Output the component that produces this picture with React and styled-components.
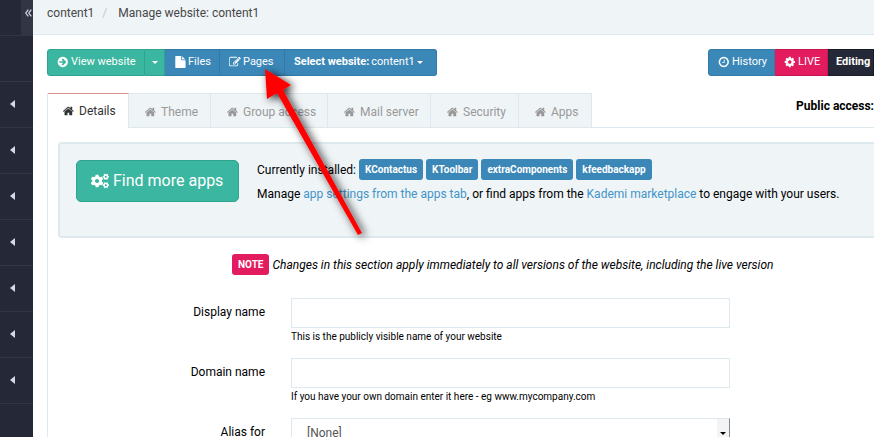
import React from "react";
import styled, { createGlobalStyle, css } from "styled-components";
import { FaCogs } from "react-icons/fa";

const c = {
  dark: "#252836",
  darkLight: "#323544",
  pale: "#eff4f7",
  line: "#dde8ef",
  blue: "#3b87b8",
  blueEdge: "#3079a8",
  green: "#3bb6a0",
  greenEdge: "#2fa38e",
  pink: "#e31b5f",
};

const Global = createGlobalStyle`
  * { box-sizing: border-box; }
  body { margin: 0; background: #fff; color: #000; font: 12px/18px Roboto, "Liberation Sans", sans-serif; }
  button, input, select { font: inherit; }
`;

const icons = {
  home: "M1408 992v480q0 26-19 45t-45 19h-384v-384h-256v384h-384q-26 0-45-19t-19-45v-480q0-1 .5-3t.5-3l575-474 575 474q1 2 1 6zm223-69l-62 74q-8 9-21 11h-3q-13 0-21-7l-692-577-692 577q-12 8-24 7-13-2-21-11l-62-74q-8-10-7-23.5t11-21.5l719-599q32-26 76-26t76 26l244 204v-195q0-14 9-23t23-9h192q14 0 23 9t9 23v408l219 182q10 8 11 21.5t-7 23.5z",
  arrow: "M1413 896q0-27-18-45l-91-91-362-362q-18-18-45-18t-45 18l-91 91q-18 18-18 45t18 45l189 189h-502q-26 0-45 19t-19 45v128q0 26 19 45t45 19h502l-189 189q-19 19-19 45t19 45l91 91q18 18 45 18t45-18l362-362 91-91q18-18 18-45zm251 0q0 209-103 385.5t-279.5 279.5-385.5 103-385.5-103-279.5-279.5-103-385.5 103-385.5 279.5-279.5 385.5-103 385.5 103 279.5 279.5 103 385.5z",
  file: "M1152 512v-472q22 14 36 28l408 408q14 14 28 36h-472zm-128 32q0 40 28 68t68 28h544v1056q0 40-28 68t-68 28h-1344q-40 0-68-28t-28-68v-1600q0-40 28-68t68-28h800v544z",
  edit: "M888 1184l116-116-152-152-116 116v56h96v96h56zm440-720q-16-16-33 1l-350 350q-17 17-1 33t33-1l350-350q17-17 1-33zm80 594v190q0 119-84.5 203.5t-203.5 84.5h-832q-119 0-203.5-84.5t-84.5-203.5v-832q0-119 84.5-203.5t203.5-84.5h832q63 0 117 25 15 7 18 23 3 17-9 29l-49 49q-14 14-32 8-23-6-45-6h-832q-66 0-113 47t-47 113v832q0 66 47 113t113 47h832q66 0 113-47t47-113v-126q0-13 9-22l64-64q15-15 35-7t20 29zm-96-738l288 288-672 672h-288v-288zm444 132l-92 92-288-288 92-92q28-28 68-28t68 28l152 152q28 28 28 68t-28 68z",
  clock: "M1024 544v448q0 14-9 23t-23 9h-320q-14 0-23-9t-9-23v-64q0-14 9-23t23-9h224v-352q0-14 9-23t23-9h64q14 0 23 9t9 23zm416 352q0-148-73-273t-198-198-273-73-273 73-198 198-73 273 73 273 198 198 273 73 273-73 198-198 73-273zm224 0q0 209-103 385.5t-279.5 279.5-385.5 103-385.5-103-279.5-279.5-103-385.5 103-385.5 279.5-279.5 385.5-103 385.5 103 279.5 279.5 103 385.5z",
  cog: "M1152 896q0-106-75-181t-181-75-181 75-75 181 75 181 181 75 181-75 75-181zm512-109v222q0 12-8 23t-20 13l-185 28q-19 54-39 91 35 50 107 138 10 12 10 25t-9 23q-27 37-99 108t-94 71q-12 0-26-9l-138-108q-44 23-91 38-16 136-29 186-7 28-36 28h-222q-14 0-24.5-8.5t-11.5-21.5l-28-184q-49-16-90-37l-141 107q-10 9-25 9-14 0-25-11-126-114-165-168-7-10-7-23 0-12 8-23 15-21 51-66.5t54-70.5q-27-50-41-99l-183-27q-13-2-21-12.5t-8-23.5v-222q0-12 8-23t19-13l186-28q14-46 39-92-40-57-107-138-10-12-10-24 0-10 9-23 26-36 98.5-107.5t94.5-71.5q13 0 26 10l138 107q44-23 91-38 16-136 29-186 7-28 36-28h222q14 0 24.5 8.5t11.5 21.5l28 184q49 16 90 37l142-107q9-9 24-9 13 0 25 10 129 119 165 170 7 8 7 22 0 12-8 23-15 21-51 66.5t-54 70.5q26 50 41 98l183 28q13 2 21 12.5t8 23.5z",
};

const Glyph = styled.svg`
  flex: none;
  width: 12px;
  height: 12px;
  fill: currentColor;
`;
const Icon = ({ name }) => (
  <Glyph viewBox={name === "file" ? "0 0 1664 1792" : "64 0 1728 1792"} aria-hidden="true">
    <path d={icons[name]} />
  </Glyph>
);

const Page = styled.div`
  display: flex;
  height: 100vh;
  overflow: hidden;
`;
const Sidebar = styled.nav`
  flex: 0 0 33px;
  display: flex;
  flex-direction: column;
  background: ${c.dark};
`;
const SideHead = styled.div`
  display: flex;
  flex: none;
  justify-content: flex-end;
  height: 36px;
  border-bottom: 1px solid ${c.darkLight};
`;
const SideButton = styled.button`
  display: flex;
  flex: none;
  align-items: center;
  border: 0;
  color: #d5dbe2;
  ${(p) =>
    p.$collapse
      ? css`
          width: 12px;
          height: 35px;
          padding: 0 0 10px 4px;
          background: ${c.darkLight};
        `
      : css`
          height: 46px;
          padding: 0 0 2px 10px;
          background: transparent;
          border-bottom: 1px solid ${c.darkLight};
        `}
`;
const Main = styled.main`
  flex: 1;
  min-width: 0;
`;
const Breadcrumb = styled.nav`
  display: flex;
  gap: 8px;
  height: 35px;
  padding: 4px 14px;
  background: ${c.pale};
  border-bottom: 1px solid ${c.line};
  color: #484848;
  a { color: inherit; text-decoration: none; }
  i { color: #c4c9cd; font-style: normal; }
  span { margin-left: 3px; }
`;
const Content = styled.div`
  padding: 14px 0 0 14px;
`;
const Toolbar = styled.div`
  display: flex;
  justify-content: space-between;
`;
const Group = styled.div`
  display: flex;
`;
const Button = styled.button`
  display: flex;
  flex: none;
  align-items: center;
  gap: 2px;
  height: 27px;
  width: ${(p) => p.$w}px;
  padding: 0 0 1px ${(p) => p.$pad ?? 9}px;
  border: 1px solid ${(p) => p.$edge ?? c.blueEdge};
  border-left-width: ${(p) => (p.$flat ? 0 : 1)}px;
  border-radius: ${(p) => p.$radius ?? "0"};
  background: ${(p) => p.$bg ?? c.blue};
  color: #fff;
  font-size: 11px;
  white-space: nowrap;
  overflow: hidden;
  b { font-weight: 700; }
`;
const Caret = styled.span`
  flex: none;
  border: solid transparent;
  border-width: 3px 3px 0;
  border-top-color: currentColor;
`;
const TabBar = styled.div`
  display: flex;
  justify-content: space-between;
  margin-top: 17px;
  border-bottom: 1px solid ${c.line};
`;
const Tabs = styled.div`
  display: flex;
  border-left: 1px solid ${c.line};
`;
const Tab = styled.button`
  display: flex;
  align-items: center;
  gap: 4px;
  height: 34px;
  width: ${(p) => p.$w}px;
  padding: 2px 0 0 ${(p) => (p.$active ? 15 : 16)}px;
  border: 0 solid ${c.line};
  border-width: 1px 1px 0 0;
  background: ${c.pale};
  color: #999;
  white-space: nowrap;
  ${(p) =>
    p.$active &&
    css`
      height: 35px;
      margin-bottom: -1px;
      padding-bottom: 1px;
      padding-top: 0;
      border-top-color: #e0938c;
      background: #fff;
      color: #333;
    `}
`;
const Access = styled.b`
  align-self: center;
  margin-top: -8px;
`;
const Pane = styled.section`
  padding: 14px 0 0 10px;
  border-left: 1px solid ${c.line};
`;
const Well = styled.div`
  display: flex;
  gap: 18px;
  height: 96px;
  padding: 16px;
  background: ${c.pale};
  border: 2px solid ${c.line};
  border-right: 0;
  border-radius: 4px 0 0 4px;
`;
const BigButton = styled.button`
  display: flex;
  flex: none;
  align-items: center;
  gap: 4px;
  width: 163px;
  height: 42px;
  padding: 0 0 1px 14px;
  border: 1px solid ${c.greenEdge};
  border-radius: 5px;
  background: ${c.green};
  color: #fff;
  font-size: 16px;
  white-space: nowrap;
`;
const WellText = styled.div`
  margin-top: -1px;
  p {
    display: flex;
    align-items: center;
    gap: 3px;
    height: 21px;
    margin: 0 0 4px;
    white-space: nowrap;
  }
  p + p { display: block; line-height: 21px; }
  a { color: #4394c7; text-decoration: none; }
`;
const Badge = styled.span`
  padding: 0 6px;
  border-radius: 3px;
  background: ${(p) => (p.$pink ? c.pink : c.blue)};
  color: #fff;
  font-size: 10px;
  font-style: normal;
  font-weight: 700;
  line-height: 21px;
`;
const Note = styled.p`
  display: flex;
  align-items: center;
  gap: 3px;
  margin: 16px 0 23px 174px;
  font-style: italic;
  white-space: nowrap;
`;
const Row = styled.div`
  display: grid;
  grid-template-columns: 207px minmax(0, 439px);
  column-gap: 26px;
  margin-bottom: 12px;
`;
const Label = styled.label`
  padding-top: 5px;
  text-align: right;
`;
const Input = styled.input`
  display: block;
  width: 100%;
  height: 30px;
  padding: 0 12px;
  border: 1px solid ${c.line};
  background: #fff;
`;
const Help = styled.small`
  display: block;
  height: 18px;
  font-size: 10px;
  white-space: nowrap;
`;
const SelectBox = styled.div`
  display: flex;
  height: 30px;
  border: 1px solid ${c.line};
  border-right-color: #858a90;
`;
const Select = styled.select`
  flex: 1;
  min-width: 0;
  padding: 0 15px;
  border: 0;
  appearance: none;
  background: #fff;
  color: #555;
`;
const SelectArrow = styled.span`
  display: grid;
  place-items: center;
  width: 12px;
  background: #f3f4f5;
`;
const Pointer = styled.svg`
  position: absolute;
  left: 250px;
  top: 60px;
  width: 130px;
  height: 190px;
  pointer-events: none;
`;

const tabs = [["Theme", 82], ["Group access", 117], ["Mail server", 103], ["Security", 88], ["Apps", 73]];
const apps = ["KContactus", "KToolbar", "extraComponents", "kfeedbackapp"];

export default function App() {
  return (
    <>
      <Global />
      <Page>
        <Sidebar>
          <SideHead>
            <SideButton $collapse aria-label="Collapse menu">
              <svg width="7" height="8" viewBox="0 0 7 8" fill="none" stroke="currentColor" strokeWidth="1.2">
                <path d="M3.3 .7 .8 4l2.5 3.3M6.3 .7 3.8 4l2.5 3.3" />
              </svg>
            </SideButton>
          </SideHead>
          {[0, 1, 2, 3, 4, 5, 6, 7].map((i) => (
            <SideButton key={i} aria-label={`Menu section ${i + 1}`}>
              {i > 0 && (
                <svg width="5" height="8" viewBox="0 0 5 8" fill="currentColor">
                  <path d="M5 0v8L0 4z" />
                </svg>
              )}
            </SideButton>
          ))}
        </Sidebar>
        <Main>
          <Breadcrumb>
            <a href="#content">content1</a>
            <i>/</i>
            <span>Manage website: content1</span>
          </Breadcrumb>
          <Content>
            <Toolbar>
              <Group>
                <Button $w={98} $bg={c.green} $edge={c.greenEdge} $radius="3px 0 0 3px"><Icon name="arrow" />View website</Button>
                <Button $w={20} $pad={7} $flat $bg={c.green} $edge={c.greenEdge} aria-label="View options"><Caret /></Button>
                <Button $w={55} $flat><Icon name="file" />Files</Button>
                <Button $w={65} $flat><Icon name="edit" />Pages</Button>
                <Button $w={152} $flat $radius="0 3px 3px 0"><b>Select website:</b>content1 <Caret /></Button>
              </Group>
              <Group>
                <Button $w={67} $radius="3px 0 0 3px"><Icon name="clock" />History</Button>
                <Button $w={53} $flat $bg={c.pink} $edge="#c9164f"><Icon name="cog" />LIVE</Button>
                <Button $w={46} $pad={8} $flat $bg={c.dark} $edge="#191b25"><b>Editing v</b></Button>
              </Group>
            </Toolbar>
            <TabBar>
              <Tabs role="tablist">
                <Tab $w={81} $active role="tab" aria-selected="true"><Icon name="home" />Details</Tab>
                {tabs.map(([name, w]) => (
                  <Tab key={name} $w={w} role="tab" aria-selected="false"><Icon name="home" />{name}</Tab>
                ))}
              </Tabs>
              <Access>Public access:</Access>
            </TabBar>
            <Pane>
              <Well>
                <BigButton><FaCogs size={18} />Find more apps</BigButton>
                <WellText>
                  <p>Currently installed: {apps.map((a) => <Badge key={a}>{a}</Badge>)}</p>
                  <p>
                    Manage <a href="#apps">app settings from the apps tab</a>, or find apps from the{" "}
                    <a href="#market">Kademi marketplace</a> to engage with your users.
                  </p>
                </WellText>
              </Well>
              <Note><Badge $pink>NOTE</Badge>Changes in this section apply immediately to all versions of the website, including the live version</Note>
              <Row>
                <Label htmlFor="display">Display name</Label>
                <div>
                  <Input id="display" />
                  <Help>This is the publicly visible name of your website</Help>
                </div>
              </Row>
              <Row>
                <Label htmlFor="domain">Domain name</Label>
                <div>
                  <Input id="domain" />
                  <Help>If you have your own domain enter it here - eg www.mycompany.com</Help>
                </div>
              </Row>
              <Row>
                <Label htmlFor="alias">Alias for</Label>
                <SelectBox>
                  <Select id="alias"><option>[None]</option></Select>
                  <SelectArrow><Caret /></SelectArrow>
                </SelectBox>
              </Row>
            </Pane>
          </Content>
        </Main>
      </Page>
      <Pointer viewBox="250 60 130 190" aria-hidden="true">
        <defs>
          <filter id="shade" x="-30%" y="-30%" width="160%" height="160%">
            <feDropShadow dx="3" dy="2" stdDeviation="4" floodColor="#000" floodOpacity="0.85" />
          </filter>
        </defs>
        <path filter="url(#shade)" fill="#f00" d="M265 69 267 99 277 93 358 235 362 233 283 90 291 85z" />
      </Pointer>
    </>
  );
}
